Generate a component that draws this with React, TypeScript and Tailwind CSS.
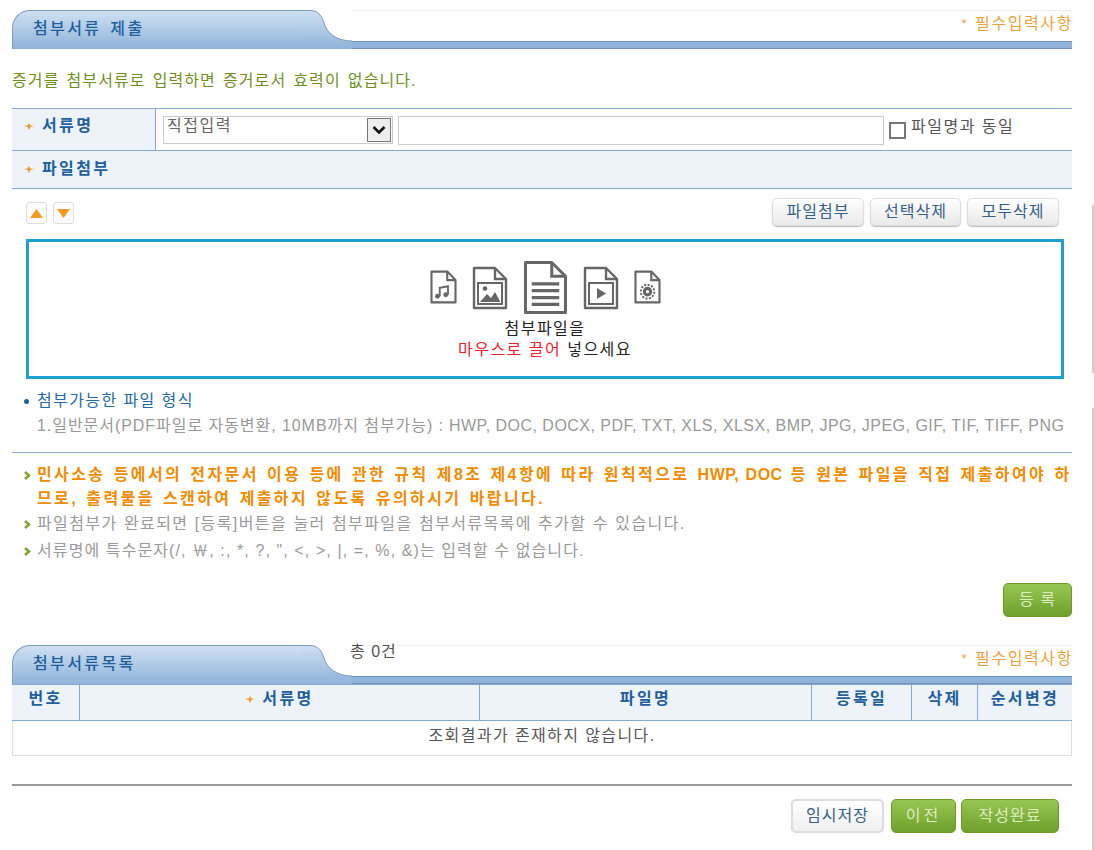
import React from 'react';

const FONT = "font-['Liberation_Sans','Noto_Sans_CJK_KR',sans-serif]";

function Star({ className = '' }: { className?: string }) {
  return (
    <svg width="10" height="7" viewBox="0 0 10 7" className={className}>
      <path d="M5 0 L6.4 2.4 L10 3 L6.4 4 L5 7 L3.6 4 L0 3 L3.6 2.4 Z" fill="#ee9a2c" />
    </svg>
  );
}

function Arrow() {
  return (
    <svg width="8" height="9" viewBox="0 0 8 9" className="shrink-0">
      <path d="M2 1 L6 4.5 L2 8" fill="none" stroke="#7fa52e" strokeWidth="2.6" />
    </svg>
  );
}

function SectionHeader({ id, title, count }: { id: string; title: string; count?: boolean }) {
  return (
    <div className="relative flex h-[39px] items-stretch">
      <div className="flex w-[290px] shrink-0 rounded-tl-[18px] border-t border-l border-[#7c9cc2] bg-gradient-to-b from-[#cfe0f1] to-[#8fb3da] pt-[7px] pl-[20px] text-[#1f5f9e]">
        <span className="text-[16px] leading-[22px] font-medium tracking-[2.4px] [word-spacing:2px]">{title}</span>
      </div>
      {/* curved flare of the tab */}
      <svg width="50" height="39" viewBox="0 0 50 39" className="shrink-0">
        <defs>
          <linearGradient id={id} x1="0" y1="0" x2="0" y2="1">
            <stop offset="0" stopColor="#cfe0f1" />
            <stop offset="1" stopColor="#8fb3da" />
          </linearGradient>
        </defs>
        <path d="M0 0 L8 0 C16 0 20 6 22 13 C25 24 36 31 50 31 L50 39 L0 39 Z" fill={`url(#${id})`} />
        <path d="M0 0.5 L8 0.5 C16 0.5 20 6 22 13 C25 24 36 31 50 31" fill="none" stroke="#7c9cc2" />
      </svg>
      <div className="relative flex flex-1 flex-col">
        <div className="flex flex-1 items-start justify-end gap-[7px] border-t border-[#eeeeee] pt-[3px] text-[16px] leading-[20px] tracking-[1.6px] text-[#e9a23b]">
          <span className="text-[13px]">*</span>
          <span className="mr-[-1px]">필수입력사항</span>
        </div>
        <div className="h-[8px] border-t border-b border-[#6f90b8] bg-[#8fb3da]" />
        {count && (
          <span className="absolute top-[-3px] left-[-2px] text-[16px] leading-[20px] tracking-[1px] text-[#555555]">
            총 0건
          </span>
        )}
      </div>
    </div>
  );
}

function FileIcon({ w, h, sw = 2.5, children }: { w: number; h: number; sw?: number; children: React.ReactNode }) {
  return (
    <svg width={w} height={h} viewBox="0 0 36 44" preserveAspectRatio="none">
      <path d="M2 2 H23 L34 13 V42 H2 Z" fill="white" stroke="#666666" strokeWidth={sw} strokeLinejoin="round" />
      <path d="M23 2 V13 H34" fill="none" stroke="#666666" strokeWidth={sw} />
      {children}
    </svg>
  );
}

function GrayButton({ label, w }: { label: string; w: string }) {
  return (
    <button className={`h-[28px] ${w} rounded-[5px] border border-[#dddddd] bg-gradient-to-b from-white to-[#e9e9e9] text-[16px] tracking-[1px] text-[#35608a] shadow-[0_1px_1px_#bbbbbb]`}>
      {label}
    </button>
  );
}

function GreenButton({ label, w, tracking = 'tracking-[1px]' }: { label: string; w: string; tracking?: string }) {
  return (
    <button className={`h-[34px] ${w} ${tracking} rounded-[5px] border border-[#6f9a2a] bg-gradient-to-b from-[#98c653] to-[#6fa02a] text-[16px] text-[#dcedc0]`}>
      {label}
    </button>
  );
}

export default function App() {
  return (
    <div className={`${FONT} relative h-[850px] w-[1094px] overflow-hidden bg-white pt-[10px] pl-[12px]`}>
      {/* page scrollbar edge */}
      <div className="absolute top-[205px] right-0 h-[168px] w-[2px] bg-[#cccccc]" />
      <div className="absolute top-[408px] right-0 h-[442px] w-[2px] bg-[#cccccc]" />

      <div className="w-[1060px]">
        <SectionHeader id="tab-submit" title="첨부서류 제출" />

        <p className="mt-[20px] text-[16px] leading-[24px] tracking-[1.1px] [word-spacing:1.5px] text-[#6f8f1e]">
          증거를 첨부서류로 입력하면 증거로서 효력이 없습니다.
        </p>

        {/* form table */}
        <div className="mt-[15px] border-t border-[#86a9dc]">
          <div className="flex h-[42px] border-b border-[#86a9dc]">
            <div className="flex w-[144px] items-start gap-[8px] border-r border-[#86a9dc] bg-[#eef3fa] pt-[6px] pl-[12px]">
              <Star className="mt-[8px]" />
              <span className="text-[16px] leading-[22px] font-bold tracking-[2.4px] text-[#1f5f9e]">서류명</span>
            </div>
            <div className="flex flex-1 items-start gap-[5px] pt-[7px] pl-[7px]">
              <div className="flex h-[28px] w-[230px] items-start justify-between border border-[#cccccc] pl-[3px] text-[16px] leading-[18px] tracking-[1.5px] text-[#666666]">
                <span>직접입력</span>
                <span className="m-px flex h-[24px] w-[24px] items-center justify-center border border-[#777777] bg-[#eeeeee]">
                  <svg width="14" height="10" viewBox="0 0 14 10">
                    <path d="M1.5 2 L7 7.5 L12.5 2" fill="none" stroke="#111111" strokeWidth="2.6" />
                  </svg>
                </span>
              </div>
              <div className="h-[29px] w-[486px] border border-[#cccccc]" />
              <div className="flex items-start gap-[5px] pt-[1px] text-[16px] leading-[20px] tracking-[1.5px] text-[#555555]">
                <span className="mt-[5px] h-[17px] w-[17px] border-2 border-[#777777]" />
                <span>파일명과 동일</span>
              </div>
            </div>
          </div>
          <div className="flex h-[38px] items-start gap-[8px] border-b border-[#86a9dc] bg-[#eef3fa] pt-[7px] pl-[12px]">
            <Star className="mt-[8px]" />
            <span className="text-[16px] leading-[22px] font-bold tracking-[2.4px] text-[#1f5f9e]">파일첨부</span>
          </div>
        </div>

        {/* attach toolbar */}
        <div className="mt-[9px] flex items-start justify-between pr-[13px] pl-[14px]">
          <div className="mt-[4px] flex gap-[6px]">
            <span className="flex h-[22px] w-[21px] items-center justify-center rounded-[3px] border border-[#dddddd] bg-[#fbfbfb]">
              <svg width="13" height="9" viewBox="0 0 13 9"><path d="M6.5 0 L13 9 H0 Z" fill="#f59a1e" /></svg>
            </span>
            <span className="flex h-[22px] w-[21px] items-center justify-center rounded-[3px] border border-[#dddddd] bg-[#fbfbfb]">
              <svg width="13" height="9" viewBox="0 0 13 9"><path d="M0 0 H13 L6.5 9 Z" fill="#f59a1e" /></svg>
            </span>
          </div>
          <div className="flex gap-[6px]">
            <GrayButton label="파일첨부" w="w-[92px]" />
            <GrayButton label="선택삭제" w="w-[91px]" />
            <GrayButton label="모두삭제" w="w-[92px]" />
          </div>
        </div>

        {/* drop zone */}
        <div className="mt-[13px] ml-[14px] flex h-[140px] w-[1038px] flex-col items-center border-[3px] border-[#1ea0d0] pt-[18px]">
          <div className="flex items-start gap-[15px]">
            <div className="mt-[10px]">
              <FileIcon w={27} h={34} sw={2.8}>
                <path d="M13 34 V23 L24 21 V32" fill="none" stroke="#666" strokeWidth="2.5" />
                <circle cx="10" cy="34" r="3.2" fill="#666" />
                <circle cx="21" cy="32" r="3.2" fill="#666" />
              </FileIcon>
            </div>
            <div className="mt-[6px]">
              <FileIcon w={36} h={44} sw={2.4}>
                <rect x="6" y="17" width="24" height="21" fill="none" stroke="#666" strokeWidth="2" />
                <circle cx="13" cy="22.5" r="2.3" fill="#666" />
                <path d="M8 36 L15 28 L19 32 L23 26 L28.5 36 Z" fill="#666" />
              </FileIcon>
            </div>
            <FileIcon w={45} h={55} sw={2.4}>
              <path d="M7 19 H29 M7 24.5 H29 M7 30 H29 M7 35.5 H29" stroke="#666" strokeWidth="2.6" />
            </FileIcon>
            <div className="mt-[6px]">
              <FileIcon w={36} h={44} sw={2.4}>
                <rect x="6" y="17" width="24" height="21" fill="none" stroke="#666" strokeWidth="2" />
                <path d="M14 22 L23 27.5 L14 33 Z" fill="#666" />
              </FileIcon>
            </div>
            <div className="mt-[10px]">
              <FileIcon w={27} h={34} sw={2.8}>
                <circle cx="18" cy="28" r="5" fill="#666" stroke="#666" strokeWidth="2.5" />
                <circle cx="18" cy="28" r="9" fill="none" stroke="#666" strokeWidth="2.5" strokeDasharray="2.8 1.9" />
                <circle cx="18" cy="28" r="2.2" fill="white" />
              </FileIcon>
            </div>
          </div>
          <div className="mt-[3px] text-center text-[16px] leading-[21px] tracking-[1.5px] text-[#222222]">
            <div>첨부파일을</div>
            <div>
              <span className="text-[#f02030]">마우스로 끌어</span> 넣으세요
            </div>
          </div>
        </div>

        {/* allowed formats */}
        <div className="mt-[10px] ml-[12px] flex items-center gap-[8px] text-[16px] leading-[24px] tracking-[1.4px] text-[#2468a8]">
          <span className="h-[5px] w-[5px] rounded-full bg-[#1f5f9e]" />
          <span>첨부가능한 파일 형식</span>
        </div>
        <p className="mt-[1px] ml-[25px] text-[16px] leading-[24px] tracking-[0.48px] whitespace-nowrap text-[#999999]">
          <span className="tracking-[0.95px]">1.일반문서(PDF파일로 자동변환, 10MB까지 첨부가능) :</span> HWP, DOC, DOCX, PDF, TXT, XLS, XLSX, BMP, JPG, JPEG, GIF, TIF, TIFF, PNG
        </p>

        {/* notices */}
        <div className="mt-[14px] border-t border-[#8fa8d0] pt-[10px]">
          <div className="flex gap-[6px] pl-[11px]">
            <span className="mt-[8px]"><Arrow /></span>
            <p className="text-[16px] leading-[24px] font-bold tracking-[2.4px] [word-spacing:1.35px] whitespace-nowrap text-[#f08c00]">
              민사소송 등에서의 전자문서 이용 등에 관한 규칙 제8조 제4항에 따라 원칙적으로 <span className="tracking-[0.5px]">HWP, DOC</span> 등 원본 파일을 직접 제출하여야 하<br />
              므로, 출력물을 스캔하여 제출하지 않도록 유의하시기 바랍니다.
            </p>
          </div>
          <div className="mt-[1px] flex items-center gap-[6px] pl-[11px] text-[16px] leading-[24px] tracking-[1.4px] [word-spacing:0.5px] text-[#999999]">
            <Arrow />
            <span>파일첨부가 완료되면 [등록]버튼을 눌러 첨부파일을 첨부서류목록에 추가할 수 있습니다.</span>
          </div>
          <div className="mt-[3px] flex items-center gap-[6px] pl-[11px] text-[16px] leading-[24px] tracking-[1.1px] text-[#999999]">
            <Arrow />
            <span>서류명에 특수문자(/, ￦, :, *, ?, ", &lt;, &gt;, |, =, %, &amp;)는 입력할 수 없습니다.</span>
          </div>
        </div>

        <div className="mt-[20px] flex justify-end">
          <GreenButton label="등 록" w="w-[69px]" />
        </div>

        <div className="mt-[28px]">
          <SectionHeader id="tab-list" title="첨부서류목록" count />
        </div>

        {/* list table */}
        <div className="border-t border-[#86a9dc]">
          <div className="flex h-[36px] border-b border-[#86a9dc] bg-[#eef3fa] text-center text-[16px] leading-[28px] font-bold tracking-[2.4px] text-[#1f5f9e]">
            <div className="w-[68px] border-r border-[#86a9dc]">번호</div>
            <div className="flex w-[400px] items-start justify-center gap-[7px] border-r border-[#86a9dc]">
              <Star className="mt-[11px]" />
              <span>서류명</span>
            </div>
            <div className="w-[332px] border-r border-[#86a9dc]">파일명</div>
            <div className="w-[100px] border-r border-[#86a9dc]">등록일</div>
            <div className="w-[66px] border-r border-[#86a9dc]">삭제</div>
            <div className="flex-1">순서변경</div>
          </div>
          <div className="h-[35px] border-r border-b border-l border-[#dddddd] text-center text-[16px] leading-[30px] tracking-[1.4px] text-[#555555]">
            조회결과가 존재하지 않습니다.
          </div>
        </div>

        <div className="mt-[28px] flex justify-end border-t-2 border-[#999999] pt-[13px] pr-[13px]">
          <button className="mr-[7px] h-[34px] w-[93px] rounded-[5px] border-2 border-[#dddddd] bg-gradient-to-b from-white to-[#efefef] text-[16px] tracking-[1px] text-[#35608a]">
            임시저장
          </button>
          <GreenButton label="이전" w="w-[65px] mr-[5px]" tracking="tracking-[3px]" />
          <GreenButton label="작성완료" w="w-[98px]" />
        </div>
      </div>
    </div>
  );
}
